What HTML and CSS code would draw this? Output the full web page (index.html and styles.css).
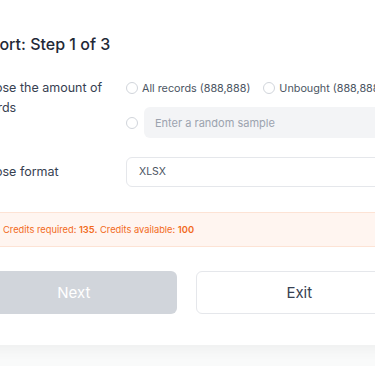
FILE: index.html
```html
<!DOCTYPE html>
<html lang="en">
<head>
    <meta charset="UTF-8">
    <meta name="viewport" content="width=device-width, initial-scale=1.0">
    <title>Export</title>
    <link rel="stylesheet" href="styles.css">
</head>
<body>
    <div class="page">
        <div class="card">
            <h1 class="title">Export: Step 1 of 3</h1>

            <div class="form-row">
                <div class="form-label">Choose the amount of records</div>
                <div class="form-field">
                    <div class="radio-line">
                        <label class="radio"><span class="radio-dot"></span>All records (888,888)</label>
                        <label class="radio"><span class="radio-dot"></span>Unbought (888,888)</label>
                    </div>
                    <div class="radio-line sample">
                        <span class="radio-dot"></span>
                        <input class="text-input" type="text" placeholder="Enter a random sample">
                    </div>
                </div>
            </div>

            <div class="form-row center">
                <div class="form-label">Choose format</div>
                <div class="form-field">
                    <div class="select">XLSX</div>
                </div>
            </div>

            <div class="warning">
                Credits required: <b>135.</b> Credits available: <b>100</b>
            </div>

            <div class="actions">
                <button class="btn btn-next" disabled>Next</button>
                <button class="btn btn-exit">Exit</button>
            </div>
        </div>
    </div>
</body>
</html>
```

FILE: styles.css
```css
:root {
    --text-dark: #1f2937;
    --text-mid: #374151;
    --text-soft: #4b5563;
    --line: #e5e7eb;
    --orange: #f26a1b;
}

* {
    margin: 0;
    padding: 0;
    box-sizing: border-box;
}

body {
    background: #f9fafa;
    font-family: Inter, "Noto Sans", sans-serif;
    color: var(--text-dark);
}

.page {
    height: 366px;
    overflow: hidden;
}

.card {
    width: 497px;
    margin-left: -62px;
    padding: 30px 32px 31px 33px;
    background: white;
    box-shadow: 0 4px 14px rgba(0,0,0,0.05);
}

.title {
    font-size: 16px;
    line-height: 28px;
    font-weight: 500;
    color: var(--text-dark);
}

.form-row {
    display: flex;
    gap: 17px;
    margin-top: 20px;
}

.form-row.center {
    align-items: center;
    margin-top: 19px;
}

.form-label {
    width: 138px;
    flex-shrink: 0;
    font-size: 12.5px;
    line-height: 20px;
    color: var(--text-mid);
}

.form-field {
    flex: 1;
    display: flex;
    flex-direction: column;
    gap: 9px;
}

.radio-line {
    display: flex;
    align-items: center;
    gap: 13px;
    height: 20px;
}

.radio-line.sample {
    gap: 6px;
    height: 31px;
}

.radio {
    display: flex;
    align-items: center;
    gap: 4px;
    font-size: 10.8px;
    color: var(--text-soft);
    white-space: nowrap;
}

.radio-dot {
    width: 12px;
    height: 12px;
    border: 1px solid #d1d5db;
    border-radius: 50%;
    background: white;
    flex-shrink: 0;
}

.text-input {
    flex: 1;
    height: 31px;
    padding: 0 11px;
    border: none;
    border-radius: 6px;
    background: #f3f4f6;
    font-family: inherit;
    font-size: 11px;
    color: var(--text-soft);
}

.text-input::placeholder {
    color: #9ca3af;
}

.select {
    height: 30px;
    line-height: 28px;
    padding: 0 12px;
    border: 1px solid var(--line);
    border-radius: 6px;
    font-size: 10.5px;
    color: var(--text-soft);
}

.warning {
    margin-top: 25px;
    height: 35px;
    line-height: 33px;
    padding-left: 32px;
    background: #fff5f0;
    border-top: 1px solid #fde3d5;
    border-bottom: 1px solid #fde3d5;
    font-size: 9.3px;
    color: var(--orange);
}

.warning b {
    font-weight: 600;
}

.actions {
    display: flex;
    gap: 19px;
    margin-top: 24px;
}

.btn {
    flex: 1;
    height: 43px;
    border-radius: 6px;
    font-family: inherit;
    font-size: 15px;
}

.btn-next {
    background: #d1d5db;
    border: none;
    color: white;
}

.btn-exit {
    background: white;
    border: 1px solid var(--line);
    color: var(--text-mid);
}
```
